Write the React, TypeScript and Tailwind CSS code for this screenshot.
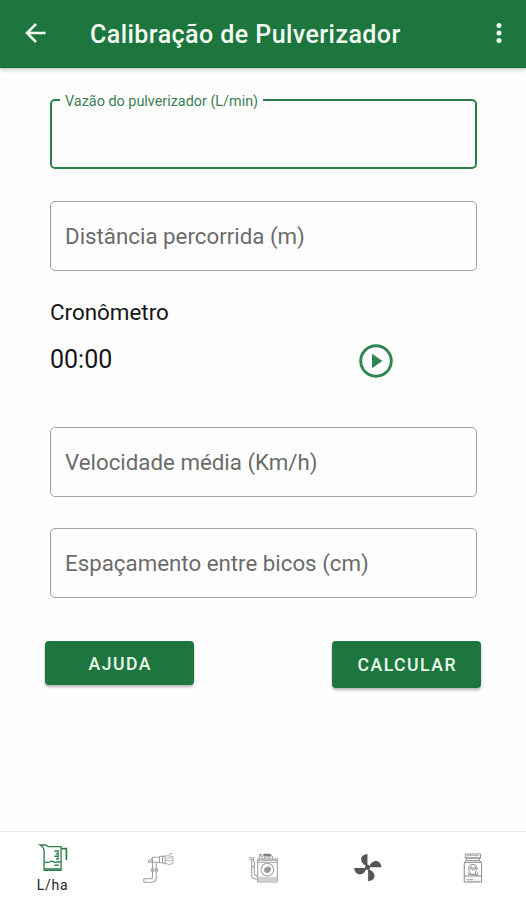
import type { ReactNode } from "react";

function Field({ label, className }: { label: string; className: string }) {
  return (
    <div className={`flex h-[70px] items-center rounded-[5px] border-[1.5px] border-[#a2a2a2] px-[14px] pt-[1px] text-[22.3px] text-[#6b6b6b] ${className}`}>
      <span className="whitespace-nowrap">{label}</span>
    </div>
  );
}

function JugIcon() {
  return (
    <svg width="32" height="32" viewBox="49.8 51 96 96" fill="none" stroke="#2c7e4b" strokeWidth="4">
      <path d="M59 60h17l7 5h39v71H71V76c0-7-5-11-12-16Z" />
      <path d="M122 71h16v34" strokeWidth="5" />
      <path d="M72 112h11c5 0 8-5 13-3 5 3 8 4 13 2h14M72 132h50" />
      <path d="M102 78h13M107 86h8M102 94h13M107 102h8M102 121h13" strokeWidth="4.5" />
      <path d="M113 76v27" strokeWidth="3" />
    </svg>
  );
}

function NozzleIcon() {
  return (
    <svg width="32" height="32" viewBox="65.4 81 96 96" fill="none" stroke="#a0a0a0" strokeWidth="3.2">
      <path d="M97 112v43c0 4-2 6-6 6H71v11h22c10 0 15-5 15-14v-46" />
      <path d="M90 111l7-14h21v15H93M87 103l-3 8h9M97 97v14M118 94h9v19h-9zM127 95l8-2v23l-8-3M93 132h19v6H93z" />
      <path d="M135 92h11l12 3v19l-9 5-14-4M137 99h18M137 107h20M146 87l12-2" stroke="#b4b4b4" />
    </svg>
  );
}

function SprayerIcon() {
  return (
    <svg width="32" height="32" viewBox="66 81 96 96" fill="none" stroke="#a0a0a0" strokeWidth="3.2">
      <path d="M98 102h59v69H98zM98 112h59M98 159h59M100 106h55M100 165h55" />
      <path d="M103 101v-8h8v8M118 101v-5h16v5M143 101v-5l-6-6" />
      <path d="M117 88h18v4h-18zM103 89h7" stroke="#7d7d7d" strokeWidth="4" />
      <circle cx="127" cy="134" r="19" />
      <path d="M119 131l11-6 7 5-3 10-8 4-7-5Z" fill="#999" />
      <path d="M72 98h13v6H72M80 104v50c0 7 8 8 17 8M86 106l3 12-5 8-5-4M88 124v25l9 5" />
    </svg>
  );
}

function FanIcon() {
  return (
    <svg width="32" height="32" viewBox="66.6 81 96 96" fill="#555">
      <path d="M113 87v36c-12-3-19-11-19-21 0-9 9-14 19-15Z" />
      <path d="M155 127h-37c3-12 11-19 21-19 9 0 15 9 16 19Z" />
      <path d="M115 169v-36c12 3 19 11 19 21 0 9-9 14-19 15Z" />
      <path d="M73 129h37c-3 12-11 19-21 19-9 0-15-9-16-19Z" />
      <path d="M108 119h8l5 6-2 10h-7l-7-6Z" />
    </svg>
  );
}

function BottleIcon() {
  return (
    <svg width="32" height="32" viewBox="382.2 81 96 96" fill="none" stroke="#8c8c8c" strokeWidth="3">
      <path d="M407 87h46v12h-46zM410 99h40v8h-40zM410 107l-6 7v57h52v-57l-6-7M404 112h52M404 153h52" />
      <path d="M412 92h36M410 164h21M413 169h38" stroke="#aaa" />
      <path d="M421 140c-5-5-5-17 2-20 5-3 13-2 17 3 4 5 2 12-2 17v8h-15zM418 148l28 3M415 143l4 8M445 142l-3 8M427 134h8" />
      <circle cx="425" cy="129" r="3" />
      <circle cx="436" cy="129" r="3" />
    </svg>
  );
}

function Tab({ children }: { children: ReactNode }) {
  return <div className="flex flex-1 justify-center pt-[20px]">{children}</div>;
}

export default function App() {
  return (
    <div className="flex h-[900px] w-[526px] flex-col overflow-hidden bg-[#fefefe] font-['Roboto','Liberation_Sans',sans-serif] text-[#151515]">
      <header className="flex h-[68px] shrink-0 items-center border-b border-[#0f6a30] bg-[#1e763f] text-[#f2fbf2] shadow-[0_2px_4px_rgba(0,0,0,0.22)]">
        <svg className="mt-[-2px] ml-[25px] shrink-0" width="22" height="22" viewBox="0 0 22 22" fill="none" stroke="currentColor" strokeWidth="2.5">
          <path d="M20.5 11H2.5M11 2L2 11l9 9" />
        </svg>
        <h1 className="ml-[43px] pt-[2px] text-[25px] font-medium tracking-[0.44px] whitespace-nowrap">Calibração de Pulverizador</h1>
        <svg className="mt-[-2px] mr-[22px] ml-auto" width="10" height="22" viewBox="0 0 10 22" fill="currentColor">
          <circle cx="5" cy="3.6" r="2.5" />
          <circle cx="5" cy="11" r="2.5" />
          <circle cx="5" cy="18.4" r="2.5" />
        </svg>
      </header>

      <main className="flex flex-1 flex-col px-[50px]">
        <fieldset className="mt-[22px] h-[79px] w-[427px] rounded-[5px] border-2 border-[#2b7f4c] pl-[8px]">
          <legend className="h-[20px] px-[5px] text-[14.4px] leading-[23px] whitespace-nowrap text-[#3a7f56]">Vazão do pulverizador (L/min)</legend>
        </fieldset>
        <Field label="Distância percorrida (m)" className="mt-[32px] w-[427px]" />
        <p className="mt-[26px] text-[22.4px] leading-[30px]">Cronômetro</p>
        <div className="mt-[17px] flex h-[34px] w-[343px] items-center justify-between">
          <span className="pb-[2px] text-[25px] leading-[30px]">00:00</span>
          <svg width="34" height="34" viewBox="0 0 34 34" fill="none">
            <circle cx="17" cy="17" r="15.3" stroke="#2f8553" strokeWidth="2.9" />
            <path d="M13 9.8v14.4L23.4 17Z" fill="#2f8553" />
          </svg>
        </div>
        <Field label="Velocidade média (Km/h)" className="mt-[49px] w-[427px]" />
        <Field label="Espaçamento entre bicos (cm)" className="mt-[31px] w-[427px]" />
        <div className="-mx-[5px] mt-[43px] flex items-start justify-between">
          <button className="h-[44px] w-[149px] rounded-[4px] bg-[#1e763f] pt-[2px] pl-[1.5px] text-[17.6px] font-medium tracking-[1.5px] text-[#ecfaec] shadow-[0_2px_3px_rgba(0,0,0,0.3)]">AJUDA</button>
          <button className="h-[47px] w-[149px] rounded-[4px] bg-[#1e763f] pt-[2px] pl-[1.5px] text-[17.6px] font-medium tracking-[1.5px] text-[#ecfaec] shadow-[0_2px_3px_rgba(0,0,0,0.3)]">CALCULAR</button>
        </div>
      </main>

      <nav className="flex h-[69px] shrink-0 border-t border-[#eeeeee] bg-white">
        <div className="flex flex-1 flex-col items-center pt-[10px]">
          <JugIcon />
          <span className="text-[14px] leading-[22px] tracking-[0.8px] text-[#222]">L/ha</span>
        </div>
        <Tab><NozzleIcon /></Tab>
        <Tab><SprayerIcon /></Tab>
        <Tab><FanIcon /></Tab>
        <Tab><BottleIcon /></Tab>
      </nav>
    </div>
  );
}
